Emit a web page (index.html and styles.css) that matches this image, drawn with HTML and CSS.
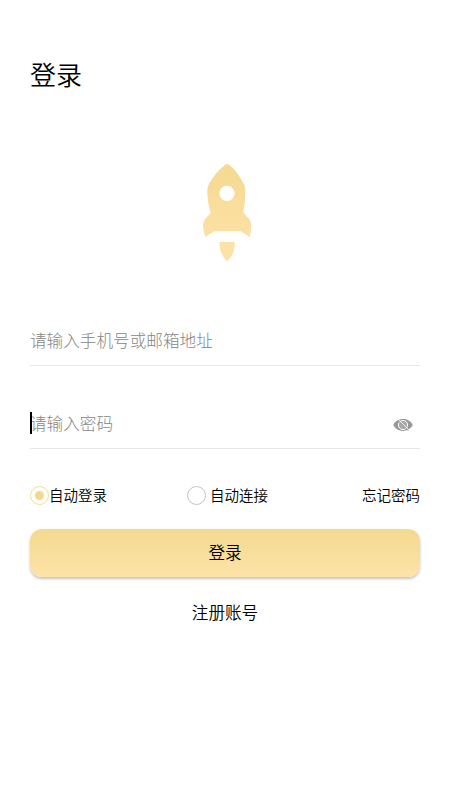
FILE: index.html
```html
<!DOCTYPE html>
<html lang="zh-CN">
<head>
<meta charset="utf-8">
<meta name="viewport" content="width=device-width, initial-scale=1">
<title>登录</title>
<link rel="stylesheet" href="styles.css">
</head>
<body>
<main class="login">
  <h1 class="title">登录</h1>
  <svg class="rocket" viewBox="0 0 225 345" aria-hidden="true">
    <defs>
      <linearGradient id="gold" x1="0" y1="0" x2="0" y2="1">
        <stop offset="0" stop-color="#f4d990"/>
        <stop offset="1" stop-color="#fce1a6"/>
      </linearGradient>
    </defs>
    <path fill="url(#gold)" fill-rule="evenodd" d="M105 30Q111 24 118 30C137 45 151 66 162 88Q167 96 166 107Q166 140 160 173L178 193Q185 201 184 213Q184 229 179 247Q166 237 152 229H74Q60 236 46 247Q40 229 39 212Q39 200 46 191L62 174Q51 137 52 105Q52 96 57 87C71 63 87 43 105 30ZM111 92A23 23 0 1 0 111 138A23 23 0 1 0 111 92Z"/>
    <path fill="#fce2a7" d="M89 261H134Q136 297 111 319Q87 295 89 261Z"/>
  </svg>
  <form class="form">
    <div class="field account"><span class="placeholder">请输入手机号或邮箱地址</span></div>
    <div class="field password">
      <span class="caret"></span>
      <span class="placeholder">请输入密码</span>
      <svg class="eye" viewBox="0 0 20 14" aria-hidden="true">
        <path fill="#999" d="M.3 7C4-.9 16-.9 19.7 7C16 14.9 4 14.9 .3 7Z"/>
        <circle cx="10" cy="7" r="4.6" fill="#aaa" stroke="#fff" stroke-width="1"/>
        <path d="M5.4 1.6L16.4 12.6" stroke="#fff" stroke-width="1"/>
        <path d="M4.6 2L15.6 13" stroke="#999" stroke-width=".9"/>
      </svg>
    </div>
    <div class="options">
      <div class="option auto-login"><span class="radio checked"></span>自动登录</div>
      <div class="option auto-connect"><span class="radio"></span>自动连接</div>
      <a class="forgot">忘记密码</a>
    </div>
    <button class="submit" type="button">登录</button>
  </form>
  <a class="register">注册账号</a>
</main>
</body>
</html>
```

FILE: styles.css
```css
* {
  box-sizing: border-box;
}

body {
  margin: 0;
  background: #fff;
  color: #000;
  font-family: "Noto Sans CJK SC", sans-serif;
  font-weight: 350;
}

.login {
  display: flex;
  flex-direction: column;
  height: 800px;
  padding: 54px 30px 0;
}

.title {
  margin: 0;
  font-size: 26px;
  font-weight: 350;
  line-height: 40px;
}

.rocket {
  width: 75px;
  height: 115px;
  margin: 61px 0 0 160px;
}

.form {
  margin-top: 47px;
}

.field {
  display: flex;
  align-items: center;
  height: 49px;
  border-bottom: 1px solid #e6e6e6;
}

.password {
  position: relative;
  height: 50px;
  margin-top: 33px;
}

.placeholder {
  margin-top: -2px;
  color: #858585;
  font-size: 16.64px;
  font-weight: 300;
  line-height: 48px;
}

.caret {
  position: absolute;
  left: 0;
  top: 13px;
  width: 2px;
  height: 22px;
  background: #000;
}

.eye {
  width: 20px;
  height: 14px;
  margin: 2px 7px 0 auto;
}

.options {
  display: grid;
  grid-template-columns: 157px 1fr auto;
  align-items: center;
  height: 20px;
  margin-top: 36px;
  font-size: 14.5px;
  line-height: 20px;
}

.option {
  display: flex;
  align-items: center;
}

.auto-connect {
  gap: 4px;
}

.radio {
  display: grid;
  place-items: center;
  width: 19px;
  height: 19px;
  border: 1px solid #c4c4c4;
  border-radius: 50%;
}

.checked {
  border-color: #f5dda0;
}

.checked::before {
  content: "";
  width: 9px;
  height: 9px;
  border-radius: 50%;
  background: #f5d88f;
}

.submit {
  display: block;
  width: 100%;
  height: 48px;
  margin-top: 24px;
  padding: 0 0 2px;
  border: 0;
  border-radius: 12px;
  background: linear-gradient(#f4d990, #fde3a8);
  box-shadow: 0 2px 3px rgba(0, 0, 0, .24);
  color: #000;
  font: inherit;
  font-size: 16.6px;
}

.register {
  margin-top: 23px;
  font-size: 16.6px;
  line-height: 24px;
  text-align: center;
}
```
